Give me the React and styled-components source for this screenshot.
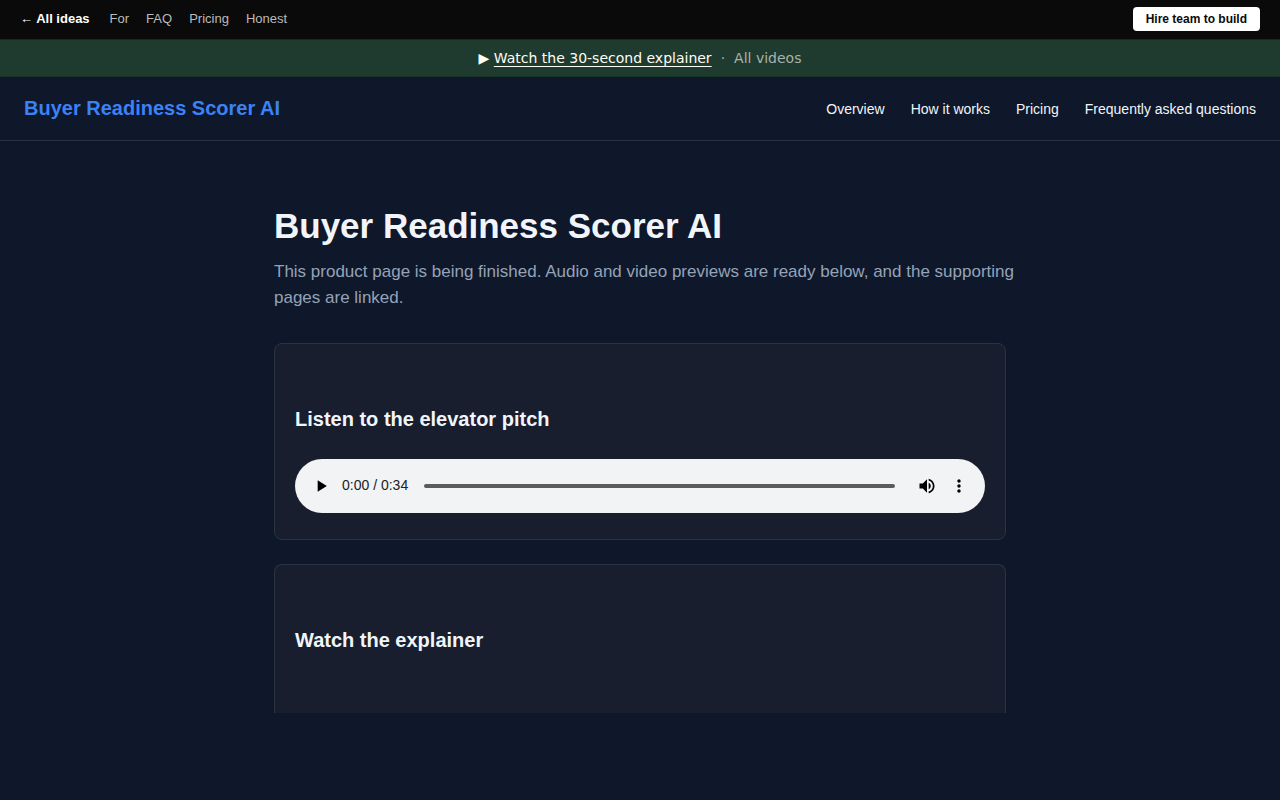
import React, { useState } from 'react';
import styled, { createGlobalStyle } from 'styled-components';

const GlobalStyle = createGlobalStyle`
  * {
    box-sizing: border-box;
  }

  body {
    margin: 0;
    background-color: #0f172a;
    color: #f1f5f9;
    font-family: "Liberation Sans", Arial, sans-serif;
    font-size: 16px;
    line-height: 26px;
  }
`;

const TopBar = styled.nav`
  display: flex;
  align-items: center;
  gap: 17px;
  padding: 7px 20px 8px;
  background-color: #0a0a0a;
  border-bottom: 1px solid #222;
  font-size: 13px;
  line-height: 24px;
`;

const TopLink = styled.a`
  color: ${props => (props.$home ? '#fff' : '#bbb')};
  font-weight: ${props => (props.$home ? 'bold' : 'normal')};
  margin-right: ${props => (props.$home ? '3px' : '0')};
  text-decoration: none;
`;

const HireLink = styled.a`
  margin-left: auto;
  padding: 0 13px;
  background-color: #fff;
  border-radius: 4px;
  color: #0a0a0a;
  font-size: 12px;
  font-weight: bold;
  text-decoration: none;
`;

const Banner = styled.div`
  display: flex;
  justify-content: center;
  gap: 9px;
  padding: 8px 16px;
  background-color: #1f3a2e;
  border-bottom: 1px solid #1a3327;
  color: #a9b2a8;
  font-family: "DejaVu Sans", sans-serif;
  font-size: 14px;
  line-height: 20px;
`;

const WatchLink = styled.a`
  color: #fffdf5;
  text-decoration: none;

  span {
    text-decoration: underline;
    text-underline-offset: 3px;
  }
`;

const VideosLink = styled.a`
  color: inherit;
  text-decoration: none;
`;

const Header = styled.header`
  display: flex;
  align-items: center;
  justify-content: space-between;
  flex-wrap: wrap;
  padding: 17px 24px 18px;
  border-bottom: 1px solid #283245;
`;

const Brand = styled.a`
  color: #3b82f6;
  font-size: 20px;
  font-weight: bold;
  text-decoration: none;
`;

const Menu = styled.nav`
  display: flex;
  flex-wrap: wrap;
  gap: 26px;
  padding-top: 2px;
`;

const MenuLink = styled.a`
  color: #f1f5f9;
  font-size: 14px;
  text-decoration: none;
`;

const Main = styled.main`
  max-width: 780px;
  margin: 0 auto;
  padding: 64px 24px 87px;
`;

const Title = styled.h1`
  margin: 0 0 12px;
  font-size: 35px;
  line-height: 42px;
`;

const Lead = styled.p`
  margin: 0 -16px 32px 0;
  color: #94a3b8;
  font-size: 17px;
`;

const Card = styled.section`
  padding: 60px 20px ${props => (props.$open ? '58px' : '26px')};
  background-color: #181e2e;
  border: 1px solid #2a3441;
  border-radius: 8px;

  ${props => props.$open && `
    margin-top: 24px;
    border-bottom: 0;
    border-radius: 8px 8px 0 0;
  `}
`;

const CardTitle = styled.h2`
  margin: 0;
  font-size: 20px;
  line-height: 30px;
`;

const Player = styled.div`
  display: flex;
  align-items: center;
  height: 54px;
  margin-top: 25px;
  padding: 0 10px;
  background-color: #f1f3f4;
  border-radius: 27px;
  color: #202124;
  font-size: 14px;
`;

const PlayerButton = styled.button`
  display: flex;
  align-items: center;
  justify-content: center;
  width: 32px;
  height: 32px;
  padding: 0;
  background: none;
  border: 0;
  color: #000;
  cursor: pointer;

  svg {
    width: 20px;
    height: 20px;
    fill: currentColor;
  }
`;

const Time = styled.span`
  margin: 0 16px 0 5px;
  padding-bottom: 2px;
`;

const Timeline = styled.input`
  flex: 1;
  min-width: 0;
  height: 4px;
  margin: 0 16px 0 0;
  appearance: none;
  background-color: #5a5b5c;
  border-radius: 2px;
  cursor: pointer;

  &::-webkit-slider-thumb {
    appearance: none;
    width: 1px;
    height: 4px;
    background: transparent;
  }
`;

const topLinks = ['For', 'FAQ', 'Pricing', 'Honest'];
const menuLinks = ['Overview', 'How it works', 'Pricing', 'Frequently asked questions'];

const formatTime = seconds => `0:${String(seconds).padStart(2, '0')}`;

const AudioPlayer = ({ duration }) => {
  const [position, setPosition] = useState(0);

  return (
    <Player>
      <PlayerButton type="button" aria-label="Play">
        <svg viewBox="0 0 24 24"><path d="M8 5v14l11-7z" /></svg>
      </PlayerButton>
      <Time>{formatTime(position)} / {formatTime(duration)}</Time>
      <Timeline
        type="range"
        aria-label="Audio position"
        min="0"
        max={duration}
        value={position}
        onChange={e => setPosition(Number(e.target.value))}
      />
      <PlayerButton type="button" aria-label="Mute">
        <svg viewBox="0 0 24 24">
          <path d="M3 9v6h4l5 5V4L7 9H3zm13.5 3c0-1.77-1.02-3.29-2.5-4.03v8.05c1.48-.73 2.5-2.25 2.5-4.02zM14 3.23v2.06c2.89.86 5 3.54 5 6.71s-2.11 5.85-5 6.71v2.06c4.01-.91 7-4.49 7-8.77s-2.99-7.86-7-8.77z" />
        </svg>
      </PlayerButton>
      <PlayerButton type="button" aria-label="More options">
        <svg viewBox="0 0 24 24">
          <path d="M12 8c1.1 0 2-.9 2-2s-.9-2-2-2-2 .9-2 2 .9 2 2 2zm0 2c-1.1 0-2 .9-2 2s.9 2 2 2 2-.9 2-2-.9-2-2-2zm0 6c-1.1 0-2 .9-2 2s.9 2 2 2 2-.9 2-2-.9-2-2-2z" />
        </svg>
      </PlayerButton>
    </Player>
  );
};

const App = () => (
  <>
    <GlobalStyle />
    <TopBar>
      <TopLink href="#ideas" $home>← All ideas</TopLink>
      {topLinks.map(name => (
        <TopLink key={name} href={`#${name.toLowerCase()}`}>{name}</TopLink>
      ))}
      <HireLink href="#hire">Hire team to build</HireLink>
    </TopBar>
    <Banner>
      <WatchLink href="#explainer">▶ <span>Watch the 30-second explainer</span></WatchLink>
      <span>·</span>
      <VideosLink href="#videos">All videos</VideosLink>
    </Banner>
    <Header>
      <Brand href="#overview">Buyer Readiness Scorer AI</Brand>
      <Menu>
        {menuLinks.map(name => (
          <MenuLink key={name} href="#page">{name}</MenuLink>
        ))}
      </Menu>
    </Header>
    <Main>
      <Title>Buyer Readiness Scorer AI</Title>
      <Lead>
        This product page is being finished. Audio and video previews are ready
        below, and the supporting pages are linked.
      </Lead>
      <Card>
        <CardTitle>Listen to the elevator pitch</CardTitle>
        <AudioPlayer duration={34} />
      </Card>
      <Card id="explainer" $open>
        <CardTitle>Watch the explainer</CardTitle>
      </Card>
    </Main>
  </>
);

export default App;
